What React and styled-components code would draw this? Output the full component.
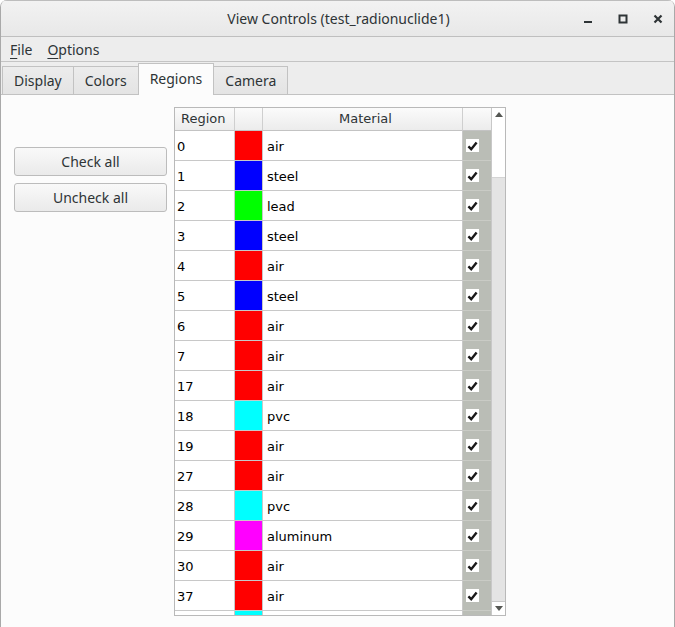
import styled, { createGlobalStyle, css } from "styled-components";

const GlobalStyle = createGlobalStyle`
  html, body {
    margin: 0;
    padding: 0;
    background: #ffffff;
  }
  * {
    box-sizing: border-box;
  }
`;

const regions = [
  { id: 0, color: "#ff0000", material: "air" },
  { id: 1, color: "#0000ff", material: "steel" },
  { id: 2, color: "#00ff00", material: "lead" },
  { id: 3, color: "#0000ff", material: "steel" },
  { id: 4, color: "#ff0000", material: "air" },
  { id: 5, color: "#0000ff", material: "steel" },
  { id: 6, color: "#ff0000", material: "air" },
  { id: 7, color: "#ff0000", material: "air" },
  { id: 17, color: "#ff0000", material: "air" },
  { id: 18, color: "#00ffff", material: "pvc" },
  { id: 19, color: "#ff0000", material: "air" },
  { id: 27, color: "#ff0000", material: "air" },
  { id: 28, color: "#00ffff", material: "pvc" },
  { id: 29, color: "#ff00ff", material: "aluminum" },
  { id: 30, color: "#ff0000", material: "air" },
  { id: 37, color: "#ff0000", material: "air" },
];

// the next row only peeks in under the last one, its text is scrolled away
const partialRow = { color: "#00ffff" };

const tabs = ["Display", "Colors", "Regions", "Camera"];

export default function App() {
  return (
    <>
      <GlobalStyle />
      <Window>
        <TitleBar>
          <Title>View Controls (test_radionuclide1)</Title>
          <Controls>
            <ControlButton>
              <svg width="10" height="10" viewBox="0 0 10 10">
                <rect x="1" y="7" width="8" height="2" fill="#2e3436" />
              </svg>
            </ControlButton>
            <ControlButton>
              <svg width="10" height="10" viewBox="0 0 10 10">
                <rect x="1.5" y="1.5" width="7" height="7" fill="none" stroke="#2e3436" strokeWidth="2" />
              </svg>
            </ControlButton>
            <ControlButton>
              <svg width="10" height="10" viewBox="0 0 10 10">
                <path d="M1.5 1.5 L8.5 8.5 M8.5 1.5 L1.5 8.5" stroke="#2e3436" strokeWidth="2.2" />
              </svg>
            </ControlButton>
          </Controls>
        </TitleBar>

        <MenuBar>
          <MenuItem>
            <u>F</u>ile
          </MenuItem>
          <MenuItem>
            <u>O</u>ptions
          </MenuItem>
        </MenuBar>

        <TabBar>
          {tabs.map((t) => (
            <Tab key={t} $active={t === "Regions"}>
              {t}
            </Tab>
          ))}
        </TabBar>

        <Panel>
          <ButtonColumn>
            <PushButton>Check all</PushButton>
            <PushButton>Uncheck all</PushButton>
          </ButtonColumn>

          <TableFrame>
            <Grid>
              <HeaderCell>Region</HeaderCell>
              <HeaderCell />
              <HeaderCell $center>Material</HeaderCell>
              <HeaderCell $last />
              {regions.map((r) => (
                <Row key={r.id} {...r} />
              ))}
              <Cell />
              <Swatch style={{ background: partialRow.color }} />
              <Cell />
              <CheckCell />
            </Grid>
            <ScrollBar>
              <ScrollButton>
                <svg width="8" height="5" viewBox="0 0 8 5">
                  <path d="M0 5 L4 0 L8 5 Z" fill="#555753" />
                </svg>
              </ScrollButton>
              <Thumb />
              <Track />
              <ScrollButton $bottom>
                <svg width="8" height="5" viewBox="0 0 8 5">
                  <path d="M0 0 L4 5 L8 0 Z" fill="#555753" />
                </svg>
              </ScrollButton>
            </ScrollBar>
          </TableFrame>
        </Panel>
      </Window>
    </>
  );
}

function Row({ id, color, material }) {
  return (
    <>
      <Cell>{id}</Cell>
      <Swatch style={{ background: color }} />
      <Cell $material>{material}</Cell>
      <CheckCell>
        <CheckBox>
          <svg width="11" height="10" viewBox="0 0 11 10">
            <path
              d="M1.4 5.4 L4.2 8.2 L9.6 1.4"
              fill="none"
              stroke="#1a1a1a"
              strokeWidth="2.4"
              strokeLinejoin="miter"
            />
          </svg>
        </CheckBox>
      </CheckCell>
    </>
  );
}

/****************** styled component ***************/

const uiFont = css`
  font-family: "Noto Sans", "Open Sans", "DejaVu Sans", sans-serif;
  font-size: 14px;
  color: #2e3436;
`;

const Window = styled.div`
  width: 675px;
  height: 627px;
  display: flex;
  flex-direction: column;
  border-left: 1px solid #a9a9a9;
  border-right: 1px solid #a9a9a9;
  border-radius: 7px 7px 0 0;
  overflow: hidden;
  background: #ededed;
`;

const TitleBar = styled.div`
  height: 37px;
  flex: none;
  display: flex;
  align-items: center;
  justify-content: center;
  position: relative;
  border-top: 1px solid #bdbdbd;
  border-bottom: 1px solid #bfbfbf;
  background: linear-gradient(#f2f2f2, #e8e8e8);
`;

const Title = styled.div`
  ${uiFont};
  font-size: 14px;
  padding-left: 2px;
`;

const Controls = styled.div`
  position: absolute;
  right: 6px;
  top: 0;
  bottom: 0;
  display: flex;
  align-items: center;
  gap: 15px;
`;

const ControlButton = styled.div`
  width: 20px;
  height: 20px;
  display: flex;
  align-items: center;
  justify-content: center;
`;

const MenuBar = styled.div`
  height: 25px;
  flex: none;
  display: flex;
  align-items: center;
  gap: 15px;
  padding-left: 9px;
  padding-top: 2px;
  border-bottom: 1px solid #c4c4c4;
  background: #ededed;
`;

const MenuItem = styled.span`
  ${uiFont};
  line-height: 1;

  u {
    text-decoration-thickness: 1px;
    text-underline-offset: 3px;
  }
`;

const TabBar = styled.div`
  height: 32px;
  flex: none;
  display: flex;
  align-items: flex-end;
  padding-left: 1px;
  background: #ededed;
  position: relative;
  z-index: 1;
`;

const Tab = styled.div`
  ${uiFont};
  height: 28px;
  padding: 0 11px;
  display: flex;
  align-items: center;
  border: 1px solid #c2c2c2;
  border-bottom: none;
  margin-right: -1px;
  background: linear-gradient(#ececec, #e4e4e4);

  ${(props) =>
    props.$active &&
    css`
      height: 32px;
      margin-bottom: -1px;
      padding-bottom: 3px;
      background: #fcfcfc;
      position: relative;
      z-index: 2;
    `}
`;

const Panel = styled.div`
  flex: 1;
  display: flex;
  align-items: flex-start;
  gap: 7px;
  padding: 12px 0 0 13px;
  border-top: 1px solid #c2c2c2;
  background: #fcfcfc;
  overflow: hidden;
`;

const ButtonColumn = styled.div`
  width: 153px;
  display: flex;
  flex-direction: column;
  gap: 7px;
  padding-top: 40px;
`;

const PushButton = styled.button`
  ${uiFont};
  height: 29px;
  border: 1px solid #bcbcbc;
  border-radius: 3px;
  background: linear-gradient(#f9f9f9, #eaeaea);
  padding: 0;
  padding-bottom: 1px;
  cursor: pointer;
`;

const TableFrame = styled.div`
  display: flex;
  height: 509px;
  border: 1px solid #b9b9b9;
  background: #ffffff;
`;

const Grid = styled.div`
  width: 316px;
  display: grid;
  grid-template-columns: 60px 28px 200px 28px;
  grid-auto-rows: 30px;
  grid-template-rows: 23px;
  overflow: hidden;
  font-family: "DejaVu Sans", "Liberation Sans", sans-serif;
  font-size: 13px;
  color: #000000;
`;

const HeaderCell = styled.div`
  display: flex;
  align-items: center;
  justify-content: ${(p) => (p.$center ? "center" : "flex-start")};
  padding-left: 6px;
  padding-bottom: 1px;
  color: #2e3436;
  background: linear-gradient(#fbfbfb, #ececec);
  border-right: ${(p) => (p.$last ? "none" : "1px solid #cfcfcf")};
  border-bottom: 1px solid #c3c3c3;
`;

const Cell = styled.div`
  display: flex;
  align-items: center;
  padding-left: ${(p) => (p.$material ? "4px" : "2px")};
  padding-top: 1px;
  background: #ffffff;
  border-right: 1px solid #c8c8c8;
  border-bottom: 1px solid #c8c8c8;
`;

const Swatch = styled.div`
  border-right: 1px solid #c8c8c8;
  border-bottom: 1px solid #c8c8c8;
`;

const CheckCell = styled.div`
  display: flex;
  align-items: center;
  justify-content: flex-start;
  padding-left: 3px;
  background: #babdb6;
  border-bottom: 1px solid #c9cbc5;
`;

const CheckBox = styled.div`
  width: 13px;
  height: 13px;
  background: #ffffff;
  display: flex;
  align-items: center;
  justify-content: center;
`;

const ScrollBar = styled.div`
  width: 14px;
  display: flex;
  flex-direction: column;
  border-left: 1px solid #c8c8c8;
  background: #e4e4e4;
`;

const ScrollButton = styled.div`
  height: 14px;
  flex: none;
  display: flex;
  align-items: center;
  justify-content: center;
  background: #ffffff;
  ${(p) =>
    p.$bottom
      ? css`
          border-top: 1px solid #c8c8c8;
        `
      : css`
          padding-bottom: 2px;
        `}
`;

const Thumb = styled.div`
  height: 56px;
  flex: none;
  background: #ffffff;
  border-bottom: 1px solid #d4d4d4;
`;

const Track = styled.div`
  flex: 1;
`;
